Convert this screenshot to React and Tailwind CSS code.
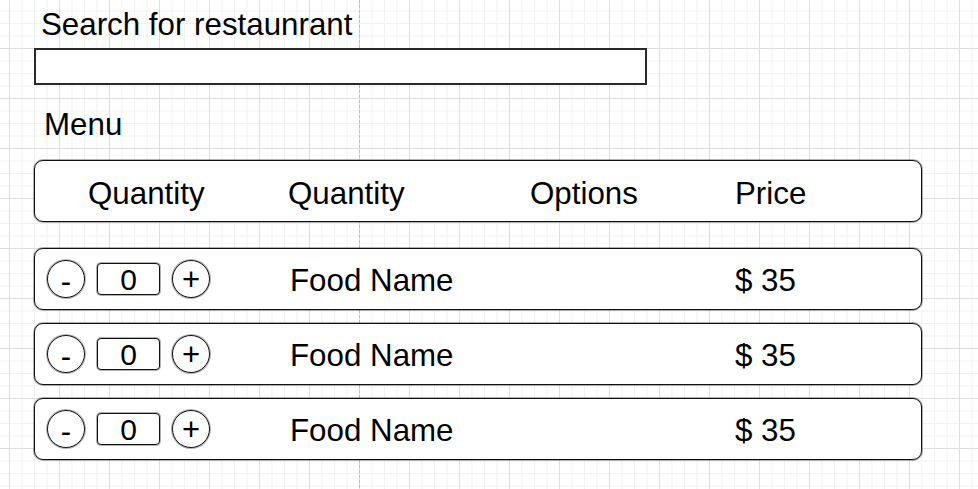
import React, { useState } from "react";

const font = "font-['Liberation_Sans',Arial,sans-serif]";

function QuantityStepper({ value }) {
  return (
    <div className="flex items-center gap-[12px]">
      <div className="w-[38px] h-[38px] rounded-full border border-[#111] shadow-[0_0_0_1px_rgba(0,0,0,0.3)] bg-white flex items-center justify-center text-[31px] leading-none pt-[4px]">
        -
      </div>
      <div className="w-[63px] h-[32px] rounded-[4px] border border-[#111] shadow-[0_0_0_1px_rgba(0,0,0,0.3)] bg-white flex items-center justify-center text-[30px] leading-none pt-[1px]">
        {value}
      </div>
      <div className="w-[38px] h-[38px] rounded-full border border-[#111] shadow-[0_0_0_1px_rgba(0,0,0,0.3)] bg-white flex items-center justify-center text-[31px] leading-none pt-[1px]">
        +
      </div>
    </div>
  );
}

export default function App() {
  const [items] = useState([
    { id: 1, name: "Food Name", qty: 0, price: 35 },
    { id: 2, name: "Food Name", qty: 0, price: 35 },
    { id: 3, name: "Food Name", qty: 0, price: 35 },
  ]);

  return (
    <div
      className={`relative min-h-screen h-[489px] overflow-hidden bg-white text-black ${font} [background-image:linear-gradient(to_right,#dedede_1px,transparent_1px),linear-gradient(to_bottom,#dedede_1px,transparent_1px),linear-gradient(to_right,#f1f1f1_1px,transparent_1px),linear-gradient(to_bottom,#f1f1f1_1px,transparent_1px)] [background-size:50px_50px,50px_50px,12.5px_12.5px,12.5px_12.5px] [background-position:9px_48px]`}
    >
      {/* page boundary guide */}
      <div className="absolute left-[359px] top-0 bottom-0 w-px bg-[repeating-linear-gradient(to_bottom,#bdbdbd_0_3px,transparent_3px_5px)]"></div>

      <div className="relative pl-[34px] flex flex-col items-start text-[31.3px] leading-[36px]">
        <div className="mt-[7px] ml-[7px] h-[36px]">Search for restaunrant</div>
        <input
          type="text"
          className="mt-[5px] w-[613px] h-[37px] border-2 border-[#2a2a2a] bg-white outline-none px-2 text-[20px]"
        />

        <div className="mt-[22px] ml-[10px] h-[36px]">Menu</div>

        {/* HEADER */}
        <div className="mt-[17px] w-[888px] h-[62px] rounded-[9px] border border-[#111] shadow-[0_0_0_1px_rgba(0,0,0,0.3)] bg-white flex items-center pl-[53px]">
          <span className="w-[200px] mt-[6px]">Quantity</span>
          <span className="w-[242px] mt-[6px]">Quantity</span>
          <span className="w-[205px] mt-[6px]">Options</span>
          <span className="mt-[6px]">Price</span>
        </div>

        {/* ROWS */}
        <div className="mt-[26px] flex flex-col gap-[13px]">
          {items.map((item) => (
            <div
              key={item.id}
              className="w-[888px] h-[62px] rounded-[9px] border border-[#111] shadow-[0_0_0_1px_rgba(0,0,0,0.3)] bg-white flex items-center pl-[12px]"
            >
              <div className="w-[243px]">
                <QuantityStepper value={item.qty} />
              </div>
              <span className="w-[445px] mt-[4px]">{item.name}</span>
              <span className="mt-[4px]">$ {item.price}</span>
            </div>
          ))}
        </div>
      </div>
    </div>
  );
}
